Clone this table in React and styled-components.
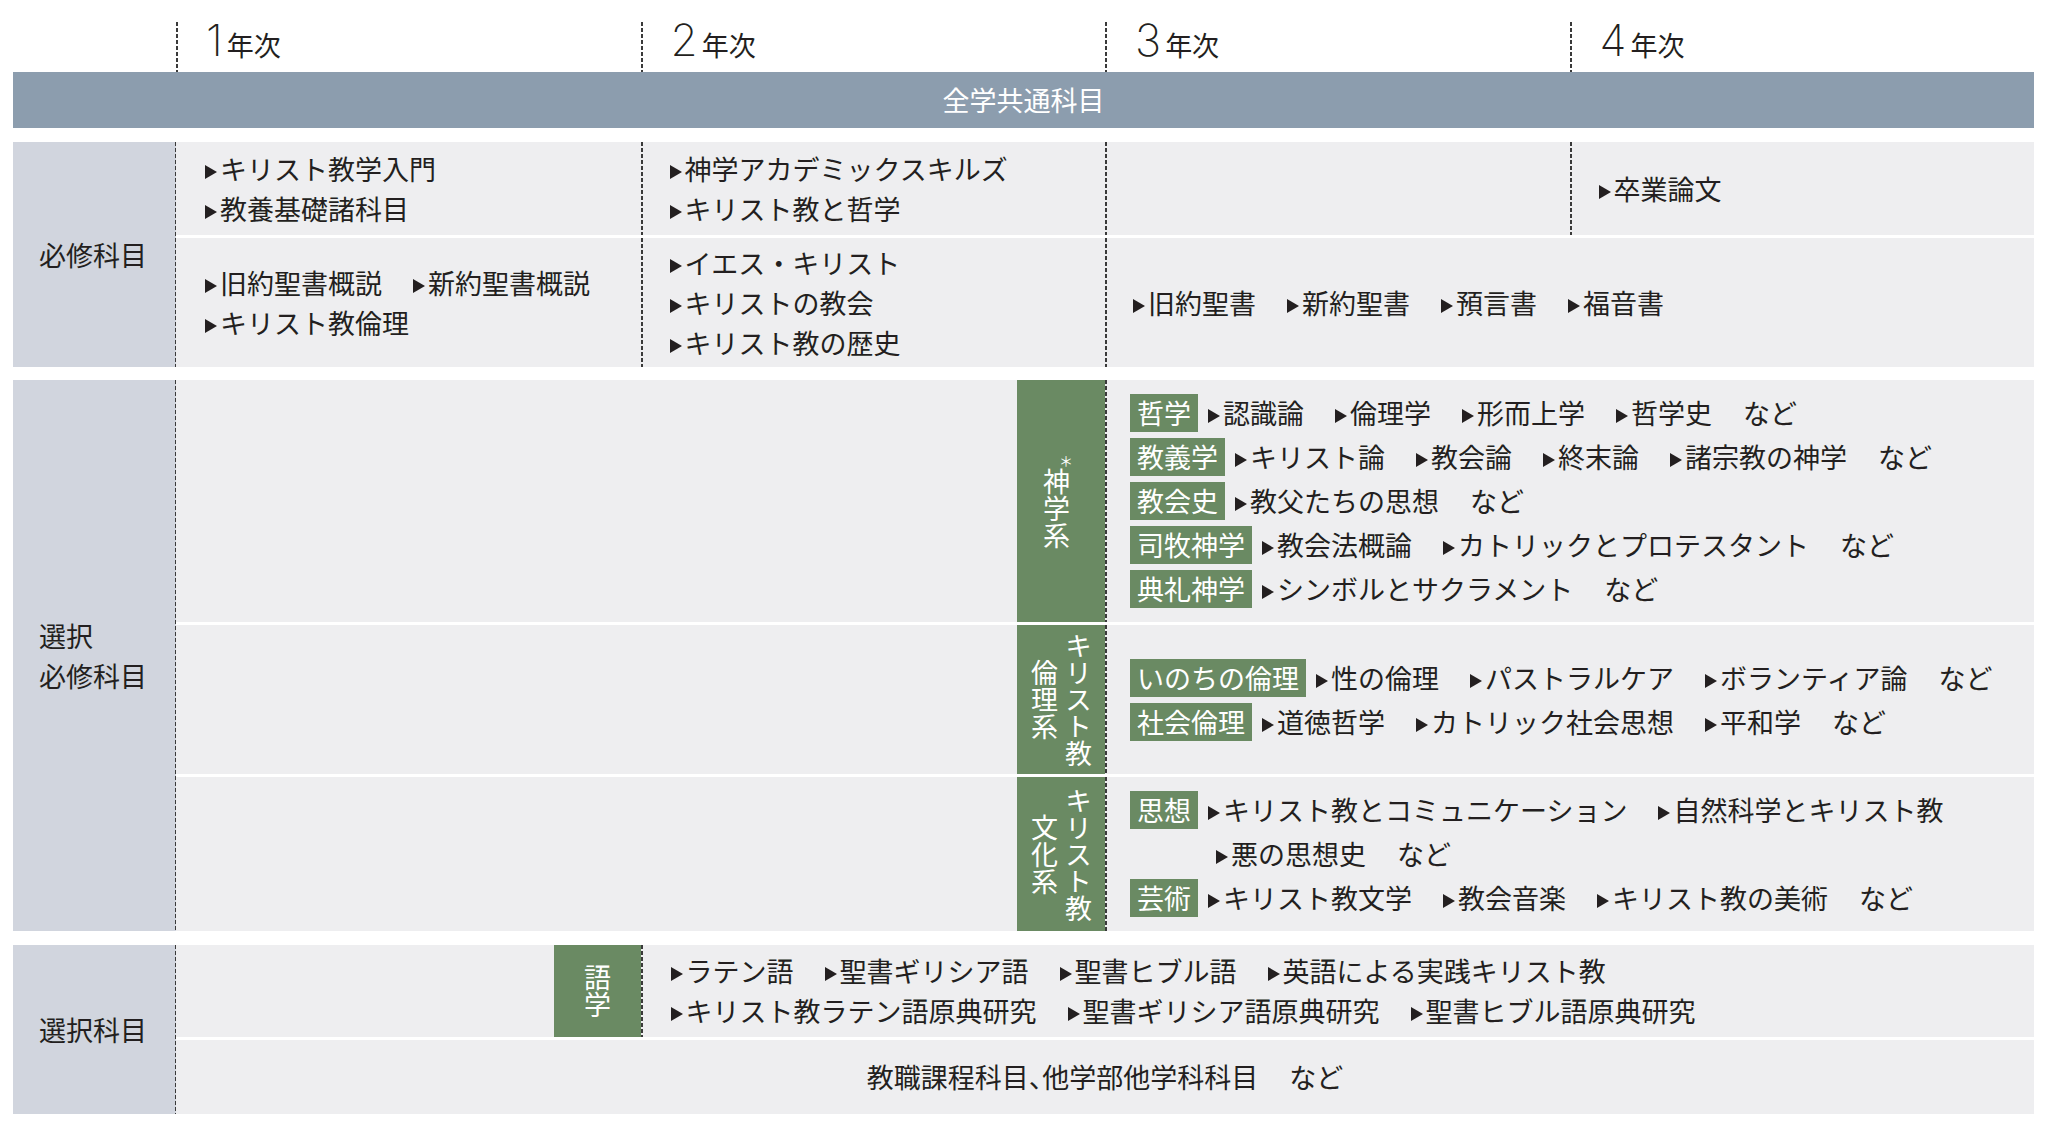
import React from "react";
import styled, { createGlobalStyle, css } from "styled-components";

const GlobalStyle = createGlobalStyle`
  body {
    margin: 0;
    background: #fff;
    color: #231f20;
    font-family: "Noto Sans CJK JP", "Noto Sans", sans-serif;
  }
`;

const dashed = (side) => css`
  background-image: linear-gradient(#3a3a3a 62%, transparent 0);
  background-size: 1.5px 6px;
  background-repeat: repeat-y;
  background-position: ${side} top;
`;

const Page = styled.div`
  width: 2021px;
  margin-left: 13px;
  padding-top: 22px;
  font-size: 27px;
  line-height: 1.3;
`;

const Header = styled.div`
  display: grid;
  grid-template-columns: 163px repeat(4, 1fr);
  height: 50px;
`;

const YearCell = styled.div`
  ${dashed("left")};
  display: flex;
  align-items: flex-end;
  padding: 0 0 14px 30px;
`;

const YearLabel = styled.span`
  display: flex;
  align-items: baseline;
  font-size: 27px;
  line-height: 1;
`;

const YearNum = styled.span`
  font-family: "Inter", "Noto Sans", sans-serif;
  font-weight: 200;
  font-size: 44px;
  line-height: 0.8;
  margin-right: 4px;
`;

const Band = styled.div`
  height: 56px;
  background: #8c9dae;
  color: #fff;
  display: flex;
  align-items: center;
  justify-content: center;
`;

const Section = styled.section`
  display: grid;
  grid-template-columns: 163px 1fr;
  margin-top: ${(p) => p.$top}px;
`;

const SideLabel = styled.div`
  background-color: #d1d5de;
  ${dashed("right")};
  display: flex;
  align-items: center;
  padding-left: 26px;
  line-height: 40px;
`;

const Rows = styled.div`
  display: flex;
  flex-direction: column;
  gap: 3px;
`;

const Row = styled.div`
  display: grid;
  grid-template-columns: repeat(4, 1fr);
  height: ${(p) => p.$h}px;
`;

const Cell = styled.div`
  grid-column: ${(p) => p.$span || "auto"};
  background-color: #eeeef0;
  ${(p) => p.$dashed && dashed("left")};
  display: flex;
  flex-direction: column;
  justify-content: center;
  align-items: ${(p) => (p.$center ? "center" : "flex-start")};
  padding-left: ${(p) => (p.$pad != null ? p.$pad : 29)}px;
`;

const SideCell = styled.div`
  grid-column: ${(p) => p.$span};
  background-color: #eeeef0;
  display: flex;
  justify-content: flex-end;
`;

const GreenBox = styled.div`
  width: ${(p) => p.$w}px;
  background: #6a8a63;
  display: flex;
  align-items: center;
  justify-content: center;
`;

const VText = styled.div`
  writing-mode: vertical-rl;
  color: #fff;
  font-size: 27px;
  line-height: 34px;
  text-align: center;
`;

const Star = styled.span`
  font-size: 14px;
  vertical-align: super;
`;

const Line = styled.div`
  display: flex;
  align-items: center;
  column-gap: 31px;
  height: ${(p) => p.$h || 40}px;
  padding-left: ${(p) => p.$indent || 0}px;
  white-space: nowrap;
`;

const Item = styled.span`
  display: inline-flex;
  align-items: center;

  &::before {
    content: "";
    flex: none;
    border-left: 12px solid #231f20;
    border-top: 7px solid transparent;
    border-bottom: 7px solid transparent;
    margin: 6px 3px 0 0;
  }
`;

const TagRow = styled.div`
  display: flex;
  align-items: flex-start;
`;

const Tag = styled.span`
  flex: none;
  background: #6a8a63;
  color: #fff;
  height: 38px;
  line-height: 38px;
  padding: 0 7px;
  margin: 3px 10px 0 0;
`;

const TagLines = styled.div`
  display: flex;
  flex-direction: column;
`;

const Halt = styled.span`
  font-feature-settings: "halt";
`;

const Items = ({ list, tail, h, indent }) => (
  <Line $h={h} $indent={indent}>
    {list.map((t) => (
      <Item key={t}>{t}</Item>
    ))}
    {tail && <span>{tail}</span>}
  </Line>
);

const theology = [
  { tag: "哲学", list: ["認識論", "倫理学", "形而上学", "哲学史"] },
  { tag: "教義学", list: ["キリスト論", "教会論", "終末論", "諸宗教の神学"] },
  { tag: "教会史", list: ["教父たちの思想"] },
  { tag: "司牧神学", list: ["教会法概論", "カトリックとプロテスタント"] },
  { tag: "典礼神学", list: ["シンボルとサクラメント"] },
];

const ethics = [
  { tag: "いのちの倫理", list: ["性の倫理", "パストラルケア", "ボランティア論"] },
  { tag: "社会倫理", list: ["道徳哲学", "カトリック社会思想", "平和学"] },
];

const TagBlock = ({ rows }) =>
  rows.map((r) => (
    <TagRow key={r.tag}>
      <Tag>{r.tag}</Tag>
      <TagLines>
        <Items list={r.list} tail="など" h={44} />
      </TagLines>
    </TagRow>
  ));

export default function App() {
  return (
    <>
      <GlobalStyle />
      <Page>
        <Header>
          <div />
          {["1", "2", "3", "4"].map((n) => (
            <YearCell key={n}>
              <YearLabel>
                <YearNum>{n}</YearNum>年次
              </YearLabel>
            </YearCell>
          ))}
        </Header>
        <Band>全学共通科目</Band>

        <Section $top={14}>
          <SideLabel>必修科目</SideLabel>
          <Rows>
            <Row $h={93}>
              <Cell>
                <Items list={["キリスト教学入門"]} />
                <Items list={["教養基礎諸科目"]} />
              </Cell>
              <Cell $dashed>
                <Items list={["神学アカデミックスキルズ"]} />
                <Items list={["キリスト教と哲学"]} />
              </Cell>
              <Cell $dashed />
              <Cell $dashed>
                <Items list={["卒業論文"]} />
              </Cell>
            </Row>
            <Row $h={129}>
              <Cell>
                <Items list={["旧約聖書概説", "新約聖書概説"]} />
                <Items list={["キリスト教倫理"]} />
              </Cell>
              <Cell $dashed>
                <Items list={["イエス・キリスト"]} />
                <Items list={["キリストの教会"]} />
                <Items list={["キリスト教の歴史"]} />
              </Cell>
              <Cell $dashed $span="3 / 5" $pad={28}>
                <Items list={["旧約聖書", "新約聖書", "預言書", "福音書"]} />
              </Cell>
            </Row>
          </Rows>
        </Section>

        <Section $top={13}>
          <SideLabel>
            選択
            <br />
            必修科目
          </SideLabel>
          <Rows>
            <Row $h={242}>
              <SideCell $span="1 / 3">
                <GreenBox $w={88}>
                  <VText>
                    <Star>＊</Star>神学系
                  </VText>
                </GreenBox>
              </SideCell>
              <Cell $dashed $span="3 / 5" $pad={25}>
                <TagBlock rows={theology} />
              </Cell>
            </Row>
            <Row $h={149}>
              <SideCell $span="1 / 3">
                <GreenBox $w={88}>
                  <VText>
                    キリスト教
                    <br />
                    倫理系
                  </VText>
                </GreenBox>
              </SideCell>
              <Cell $dashed $span="3 / 5" $pad={25}>
                <TagBlock rows={ethics} />
              </Cell>
            </Row>
            <Row $h={154}>
              <SideCell $span="1 / 3">
                <GreenBox $w={88}>
                  <VText>
                    キリスト教
                    <br />
                    文化系
                  </VText>
                </GreenBox>
              </SideCell>
              <Cell $dashed $span="3 / 5" $pad={25}>
                <TagRow>
                  <Tag>思想</Tag>
                  <TagLines>
                    <Items list={["キリスト教とコミュニケーション", "自然科学とキリスト教"]} h={44} />
                    <Items list={["悪の思想史"]} tail="など" h={44} indent={8} />
                  </TagLines>
                </TagRow>
                <TagRow>
                  <Tag>芸術</Tag>
                  <TagLines>
                    <Items list={["キリスト教文学", "教会音楽", "キリスト教の美術"]} tail="など" h={44} />
                  </TagLines>
                </TagRow>
              </Cell>
            </Row>
          </Rows>
        </Section>

        <Section $top={14}>
          <SideLabel>選択科目</SideLabel>
          <Rows>
            <Row $h={92}>
              <SideCell $span="1 / 2">
                <GreenBox $w={87}>
                  <VText>語学</VText>
                </GreenBox>
              </SideCell>
              <Cell $dashed $span="2 / 5" $pad={30}>
                <Items list={["ラテン語", "聖書ギリシア語", "聖書ヒブル語", "英語による実践キリスト教"]} />
                <Items list={["キリスト教ラテン語原典研究", "聖書ギリシア語原典研究", "聖書ヒブル語原典研究"]} />
              </Cell>
            </Row>
            <Row $h={74}>
              <Cell $span="1 / 5" $pad={0} $center>
                <Line>
                  <span>
                    教職課程科目<Halt>、</Halt>他学部他学科科目
                  </span>
                  <span>など</span>
                </Line>
              </Cell>
            </Row>
          </Rows>
        </Section>
      </Page>
    </>
  );
}
